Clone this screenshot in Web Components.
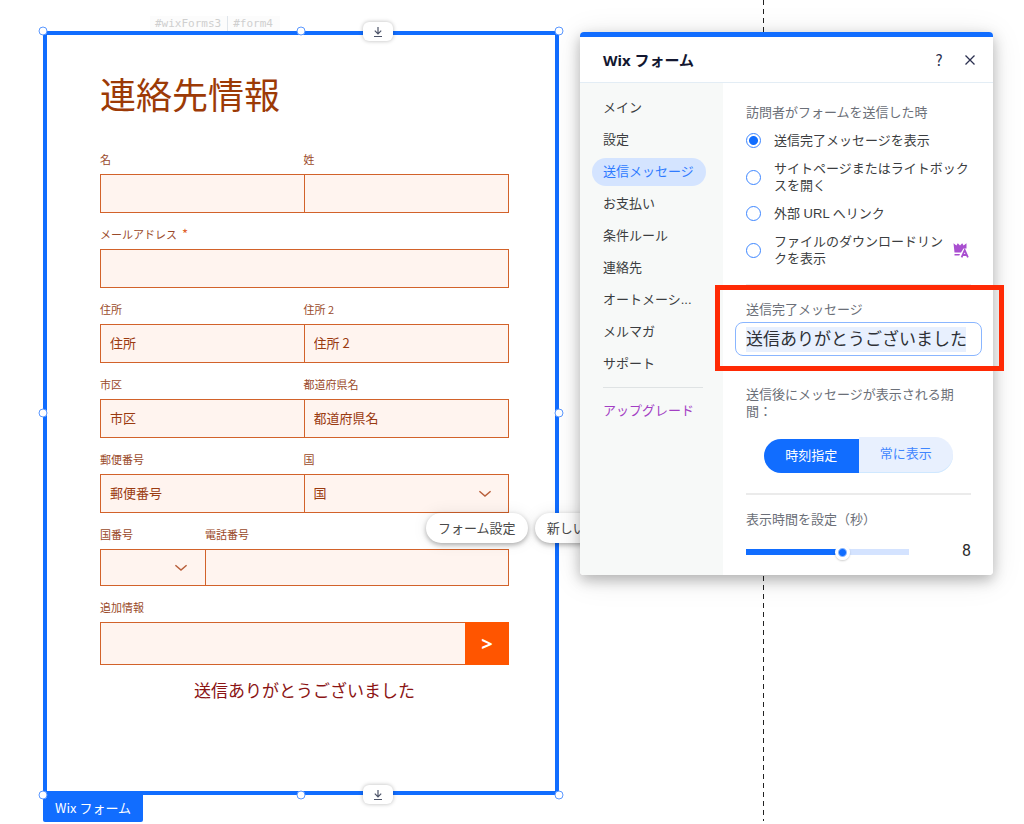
<!DOCTYPE html>
<html lang="ja">
<head>
<meta charset="utf-8">
<meta name="viewport" content="width=device-width, initial-scale=1">
<title>Wix フォーム</title>
<style>
  html, body { margin: 0; background: #fff; }
  body { font-family: "Liberation Sans", "Noto Sans CJK JP", sans-serif; font-size: 13px; line-height: 17px; color: #333; }
</style>
</head>
<body>
<editor-canvas>
  <selection-frame slot="form" name="Wix フォーム">
    <contact-form></contact-form>
  </selection-frame>
  <settings-panel slot="panel" heading="Wix フォーム">
    <panel-nav slot="nav"></panel-nav>
    <message-settings></message-settings>
  </settings-panel>
</editor-canvas>

<script>
const define = (name, html, setup) => customElements.define(name, class extends HTMLElement {
  constructor() {
    super();
    const t = document.createElement('template');
    t.innerHTML = '<style>*{box-sizing:border-box}button,input,select{font:inherit;color:inherit;margin:0}</style>' + html;
    this.attachShadow({ mode: 'open' }).append(t.content.cloneNode(true));
  }
  connectedCallback() { if (setup) setup(this, this.shadowRoot); }
});

define('form-field', `
<style>
  :host { display: block; }
  label { display: block; font-size: 11px; line-height: 16px; margin-bottom: 7px; color: #9a4a2a; white-space: pre; }
  b { margin-left: 5px; font-weight: 400; font-size: 13px; line-height: 1; color: #e0602a; }
  input { display: block; width: 100%; height: var(--field-height, 39px); padding: 0 9px 2px; border: 1px solid #d2622a; border-radius: 0; background: #fff4ef; outline: none; font-size: 13px; color: #9a3a10; }
  input::placeholder { color: #9a3a10; opacity: 1; }
  :host([joined]) input { border-right: 0; }
</style>
<label for="f"></label><input id="f" type="text">`, (el, root) => {
  const label = root.querySelector('label');
  label.textContent = el.getAttribute('label');
  if (el.hasAttribute('required')) {
    const star = document.createElement('b');
    star.textContent = '*';
    label.append(star);
  }
  root.querySelector('input').placeholder = el.getAttribute('placeholder') || '';
});

define('form-select', `
<style>
  :host { display: block; }
  label { display: block; font-size: 11px; line-height: 16px; margin-bottom: 7px; color: #9a4a2a; }
  .box { display: grid; align-items: center; }
  .box > * { grid-area: 1 / 1; }
  select { appearance: none; width: 100%; height: var(--field-height, 39px); padding: 0 9px 2px; border: 1px solid #d2622a; border-radius: 0; background: #fff4ef; outline: none; font-size: 13px; color: #9a3a10; }
  :host([joined]) select { border-right: 0; }
  svg { justify-self: end; margin-right: 17px; pointer-events: none; }
</style>
<label for="s"></label>
<div class="box"><select id="s"><option></option></select>
<svg width="14" height="8" viewBox="0 0 14 8" fill="none" stroke="#b9603c" stroke-width="1.5"><path d="M1.4 1.2 7 6 12.6 1.2"/></svg></div>`, (el, root) => {
  root.querySelector('label').textContent = el.getAttribute('label');
  root.querySelector('option').textContent = el.getAttribute('value') || '';
});

define('contact-form', `
<style>
  :host { display: block; padding: 34px 46px 89px 53px; font-family: "Noto Sans CJK JP", sans-serif; }
  h1 { margin: 0 0 34px; font-size: 36px; line-height: 48px; font-weight: 400; color: #9c3a06; }
  form { display: grid; gap: 13px; }
  .two { display: grid; grid-template-columns: calc(50% - 1px) 1fr; }
  .phone { display: grid; grid-template-columns: 105px 1fr; --field-height: 37px; }
  .send { display: grid; grid-template-columns: 1fr 44px; align-items: end; --field-height: 43px; }
  button { height: 43px; padding: 0; border: 0; background: #ff5500; color: #fff; font: 700 20px/43px "Noto Sans", sans-serif; }
  p { margin: 0; font-size: 17px; line-height: 24px; text-align: center; color: #8b1414; }
</style>
<h1>連絡先情報</h1>
<form>
  <div class="two"><form-field label="名" joined></form-field><form-field label="姓"></form-field></div>
  <form-field label="メールアドレス" required></form-field>
  <div class="two"><form-field label="住所" placeholder="住所" joined></form-field><form-field label="住所 2" placeholder="住所 2"></form-field></div>
  <div class="two"><form-field label="市区" placeholder="市区" joined></form-field><form-field label="都道府県名" placeholder="都道府県名"></form-field></div>
  <div class="two"><form-field label="郵便番号" placeholder="郵便番号" joined></form-field><form-select label="国" value="国"></form-select></div>
  <div class="phone"><form-select label="国番号" joined></form-select><form-field label="電話番号"></form-field></div>
  <div class="send"><form-field label="追加情報" joined></form-field><button type="button">&gt;</button></div>
  <p>送信ありがとうございました</p>
</form>`);

define('stretch-button', `
<style>
  :host { display: block; }
  button { display: grid; place-items: center; width: 30px; height: 19px; padding: 0; border: 0; border-radius: 6px; background: #fff; box-shadow: 0 0 4px rgba(0,0,0,.28); }
</style>
<button type="button" aria-label="ストレッチ"><svg width="12" height="12" viewBox="0 0 12 12" fill="none" stroke="#4c5368" stroke-width="1.2"><path d="M6 1v6.5M2.8 4.6 6 7.8l3.2-3.2M2 10.5h8"/></svg></button>`);

define('selection-frame', `
<style>
  :host { display: block; position: relative; }
  .frame { border: 4px solid #116dff; background: #fff; }
  i { position: absolute; width: 9px; height: 9px; border: 1px solid #5b98ff; border-radius: 50%; background: #fff; transform: translate(-50%, -50%); }
  .t { top: 0; } .m { top: 50%; } .b { top: 100%; }
  .l { left: 0; } .c { left: 50%; } .r { left: 100%; }
  stretch-button { position: absolute; left: 62%; top: -9px; }
  stretch-button.low { top: auto; bottom: -9px; }
  .ids { position: absolute; left: 107px; bottom: 100%; display: flex; font: 11px/15px "DejaVu Sans Mono", monospace; color: #cfcfcf; background: #fcfcfc; }
  .ids span { padding: 0 6px 0 5px; }
  .ids span + span { border-left: 1px solid #dfe5eb; padding-right: 7px; }
  .name { position: absolute; left: 0; top: 100%; padding: 4px 12px 6px; background: #116dff; color: #fff; border-radius: 0 0 2px 2px; white-space: nowrap; font-family: "Noto Sans CJK JP", sans-serif; }
  .actions { position: absolute; left: 383px; top: 482px; display: flex; gap: 7px; }
  .actions button { height: 30px; padding: 0 12px; border: 0; border-radius: 15px; background: #fff; color: #4a4a4a; white-space: nowrap; box-shadow: 0 2px 5px rgba(0,0,0,.3), 0 0 16px rgba(0,0,0,.08); }
</style>
<div class="ids"><span>#wixForms3</span><span>#form4</span></div>
<div class="frame"><slot></slot></div>
<div class="name"></div>
<i class="t l"></i><i class="t c"></i><i class="t r"></i><i class="m l"></i><i class="m r"></i><i class="b l"></i><i class="b c"></i><i class="b r"></i>
<stretch-button></stretch-button><stretch-button class="low"></stretch-button>
<div class="actions"><button type="button">フォーム設定</button><button type="button">新しい</button></div>`, (el, root) => {
  root.querySelector('.name').textContent = el.getAttribute('name');
});

define('panel-nav', `
<style>
  :host { display: block; }
  nav { display: grid; gap: 4px; padding: 11px 17px 11px 12px; }
  a { display: block; padding: 0 11px; line-height: 28px; border-radius: 14px; color: #3b3d40; text-decoration: none; white-space: nowrap; overflow: hidden; }
  a[aria-current] { background: #d4e4ff; color: #2f7bff; }
  hr { width: 100px; height: 1px; margin: 5px 0 5px 11px; border: 0; background: #dfe3e4; }
  a.up { color: #a33fc4; }
</style>
<nav>
  <a href="#main">メイン</a><a href="#settings">設定</a><a href="#message" aria-current="page">送信メッセージ</a><a href="#pay">お支払い</a><a href="#rules">条件ルール</a><a href="#contacts">連絡先</a><a href="#auto">オートメーシ...</a><a href="#mail">メルマガ</a><a href="#support">サポート</a>
  <hr>
  <a class="up" href="#upgrade">アップグレード</a>
</nav>`);

define('message-settings', `
<style>
  :host { display: block; padding: 21px 22px 13px 23px; }
  fieldset { display: grid; gap: 11px; margin: 0; padding: 0; border: 0; }
  legend { float: left; padding: 0; color: #6b6f78; }
  .opt { display: flex; align-items: center; }
  .opt input { appearance: none; flex: none; width: 15px; height: 15px; margin-right: 13px; border: 1px solid #3d86ff; border-radius: 50%; background: #fff; }
  .opt input:checked { background: radial-gradient(circle, #116dff 4px, #fff 5px); }
  .opt label { flex: 1; color: #3b3d40; }
  .opt svg { flex: none; margin: 0 2px 0 7px; }
  hr { height: 2px; margin: 17px 0 15px; border: 0; background: #ebebeb; }
  .cap { display: block; color: #6b6f78; }
  .msg { display: block; width: calc(100% + 22px); height: 34px; margin: 4px -11px 30px; padding: 0 10px 3px; border: 1px solid #8ab6ff; border-radius: 8px; outline: none; font-size: 17px; color: #2e3036; background: linear-gradient(#e8f0fe, #e8f0fe) 10px 4px / 220px 25px no-repeat #fff; }
  .seg { display: flex; justify-content: center; align-items: end; margin: 17px 18px 20px; }
  .seg button { flex: 1; max-width: 95px; height: 36px; padding: 0 0 3px; border: 0; border-radius: 0 18px 18px 0; background: #e8f0fe; color: #3f86ff; box-shadow: inset 0 -1px #cfe8ff; }
  .seg .on { height: 34px; border-radius: 18px 0 0 18px; padding: 0 0 2px; background: #116dff; color: #fff; box-shadow: none; }
  hr.low { margin: 0 0 16px; }
  .slide { display: flex; align-items: center; justify-content: space-between; margin-top: 14px; }
  input[type=range] { appearance: none; flex: 0 1 163px; min-width: 0; height: 20px; background: linear-gradient(90deg, #116dff 59%, #d4e3ff 59%) center / 100% 6px no-repeat; border-radius: 3px; }
  input[type=range]::-webkit-slider-thumb { appearance: none; width: 15px; height: 15px; border-radius: 50%; background: radial-gradient(circle, #116dff 3px, #fff 5px); box-shadow: 0 1px 2px rgba(0,0,0,.2); }
  .num { width: 24px; height: 20px; padding: 0 0 3px; border: 0; outline: none; background: none; text-align: right; font: 16px/17px Roboto, sans-serif; color: #2b2b2b; }
</style>
<fieldset>
  <legend>訪問者がフォームを送信した時</legend>
  <div class="opt"><input type="radio" name="a" id="r1" checked><label for="r1">送信完了メッセージを表示</label></div>
  <div class="opt"><input type="radio" name="a" id="r2"><label for="r2">サイトページまたはライトボックスを開く</label></div>
  <div class="opt"><input type="radio" name="a" id="r3"><label for="r3">外部 URL へリンク</label></div>
  <div class="opt"><input type="radio" name="a" id="r4"><label for="r4">ファイルのダウンロードリンクを表示</label>
    <svg width="16" height="16" viewBox="0 0 16 16"><path fill="#a94fd0" d="M.5 1.2 3.4 3.4 4.8 1.2 7 3.4 9.2 1.2 10.6 3.4 13.5 1.2V6.5H10.5L8 10.5H1.5ZM1.5 12H7L6.3 13.6H1.5Z"/><path fill="none" stroke="#a94fd0" stroke-width="1.8" d="M8.6 15.3 11.7 8.2 14.9 15.3M10 13H13.6"/></svg></div>
</fieldset>
<hr>
<label class="cap" for="msg">送信完了メッセージ</label>
<input class="msg" id="msg" type="text" value="送信ありがとうございました">
<span class="cap">送信後にメッセージが表示される期間：</span>
<div class="seg"><button type="button" class="on">時刻指定</button><button type="button">常に表示</button></div>
<hr class="low">
<label class="cap" for="sec">表示時間を設定（秒）</label>
<div class="slide"><input id="sec" type="range" min="2" max="12" value="8"><input class="num" type="text" value="8" aria-label="秒"></div>`);

define('settings-panel', `
<style>
  :host { display: block; position: relative; z-index: 1; }
  .card { overflow: hidden; border-radius: 4px; background: #fff; border-top: 5px solid #116dff; }
  .shadow { border-radius: 4px; box-shadow: 0 5px 14px rgba(0,0,0,.26), 0 4px 32px rgba(0,0,0,.1); }
  header { display: flex; align-items: center; height: 46px; padding: 0 16px 0 23px; border-bottom: 1px solid #e3edf5; }
  h2 { flex: 1; margin: 0; font: 700 15px/20px "Noto Sans", "Noto Sans CJK JP", sans-serif; color: #131730; }
  button { display: grid; place-items: center; width: 14px; height: 20px; margin-left: 17px; padding: 0; border: 0; background: none; color: #2b3050; font: 15px/20px "Noto Sans CJK JP", sans-serif; }
  .body { display: grid; grid-template-columns: 143px 1fr; }
  .side { background: #f7f9f8; }
  .mark { position: absolute; top: 253px; left: 135px; right: -11px; height: 86px; border: 5px solid #ff2a05; pointer-events: none; }
</style>
<div class="shadow"><div class="card">
  <header><h2></h2><button type="button" aria-label="ヘルプ">?</button>
  <button type="button" aria-label="閉じる"><svg width="12" height="12" viewBox="0 0 12 12" stroke="#2b3050" stroke-width="1.3"><path d="M1.5 1.5 10.5 10.5M10.5 1.5 1.5 10.5"/></svg></button></header>
  <div class="body"><div class="side"><slot name="nav"></slot></div><slot></slot></div>
</div></div>
<div class="mark"></div>`, (el, root) => {
  root.querySelector('h2').textContent = el.getAttribute('heading');
});

define('editor-canvas', `
<style>
  :host { display: grid; grid-template-columns: 516fr 413fr; gap: 21px; align-items: start; position: relative; overflow: hidden; min-height: 100vh; box-sizing: border-box; padding: 31px 31px 29px 43px; }
  .guide { position: absolute; left: calc(75% - 5px); top: 0; bottom: 3px; width: 1px; background: repeating-linear-gradient(#222 0 5px, transparent 5px 9px); }
  ::slotted(settings-panel) { margin-top: 1px; }
</style>
<div class="guide"></div>
<slot name="form"></slot>
<slot name="panel"></slot>`);
</script>
</body>
</html>
